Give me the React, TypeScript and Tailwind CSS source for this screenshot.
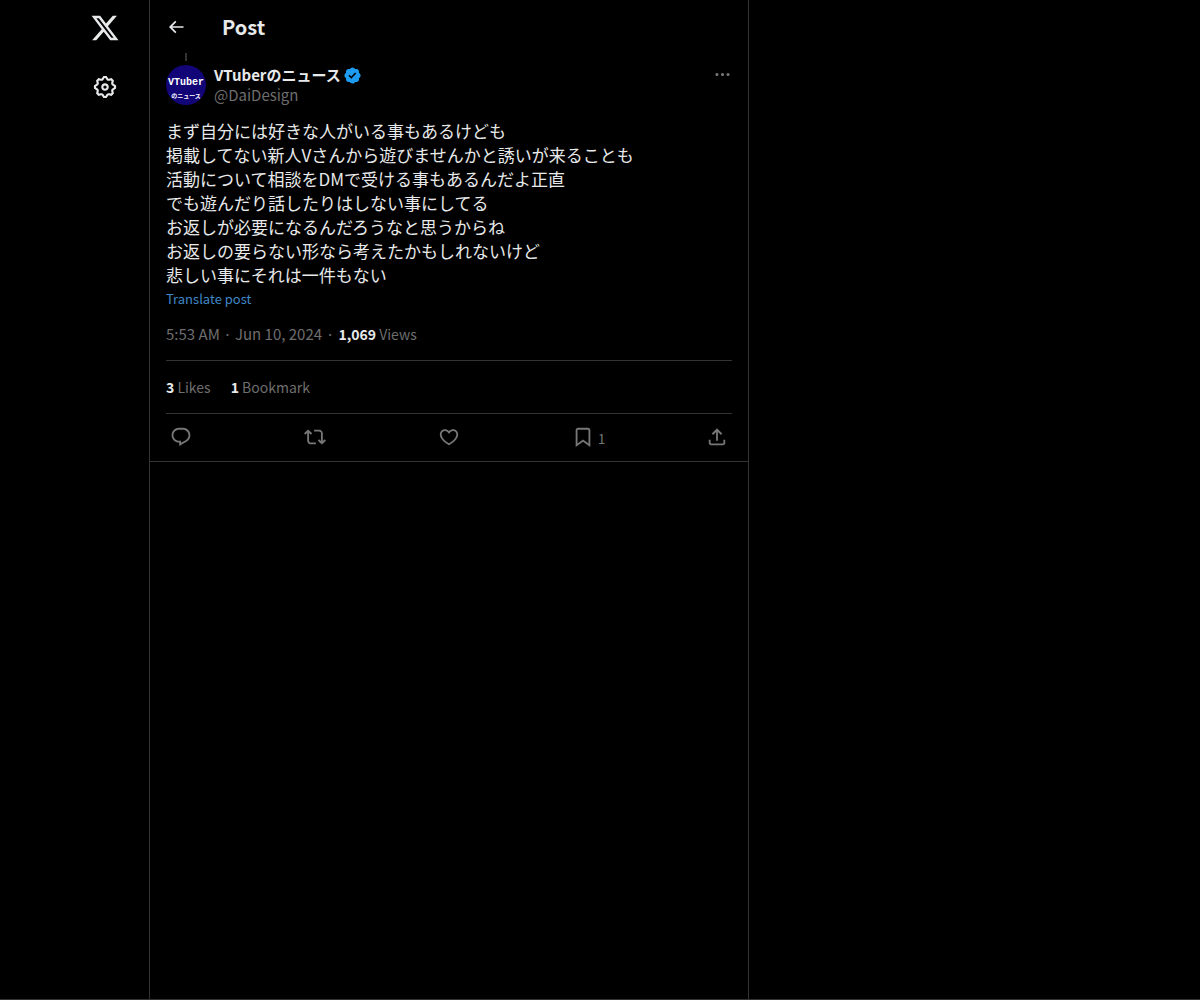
import type { ReactNode } from "react";

const paths = {
    logo: "M18.244 2.25h3.308l-7.227 8.26 8.502 11.24H16.17l-5.214-6.817L4.99 21.75H1.68l7.73-8.835L1.254 2.25H8.08l4.713 6.231zm-1.161 17.52h1.833L7.084 4.126H5.117z",
    settings: "M10.54 1.75h2.92l1.57 2.36c.11.17.32.25.53.21l2.53-.59 2.17 2.17-.58 2.54c-.05.2.04.41.21.53l2.36 1.57v2.92l-2.36 1.57c-.17.12-.26.33-.21.53l.58 2.54-2.17 2.17-2.53-.59c-.21-.04-.42.04-.53.21l-1.57 2.36h-2.92l-1.58-2.36c-.11-.17-.32-.25-.52-.21l-2.54.59-2.17-2.17.58-2.54c.05-.2-.03-.41-.21-.53l-2.35-1.57v-2.92L4.1 8.97c.18-.12.26-.33.21-.53L3.73 5.9 5.9 3.73l2.54.59c.2.04.41-.04.52-.21l1.58-2.36zm1.07 2l-.98 1.47C10.05 6.08 9 6.5 7.99 6.27l-1.46-.34-.6.6.33 1.46c.24 1.01-.18 2.07-1.05 2.64l-1.46.98v.78l1.46.98c.87.57 1.29 1.63 1.05 2.64l-.33 1.46.6.6 1.46-.34c1.01-.23 2.06.19 2.64 1.05l.98 1.47h.78l.97-1.47c.58-.86 1.63-1.28 2.65-1.05l1.45.34.61-.6-.34-1.46c-.23-1.01.18-2.07 1.05-2.64l1.47-.98v-.78l-1.47-.98c-.87-.57-1.28-1.63-1.05-2.64l.34-1.46-.61-.6-1.45.34c-1.02.23-2.07-.19-2.65-1.05l-.97-1.47h-.78zM12 10.5c-.83 0-1.5.67-1.5 1.5s.67 1.5 1.5 1.5c.82 0 1.5-.67 1.5-1.5s-.68-1.5-1.5-1.5zM8.5 12c0-1.93 1.56-3.5 3.5-3.5 1.93 0 3.5 1.57 3.5 3.5s-1.57 3.5-3.5 3.5c-1.94 0-3.5-1.57-3.5-3.5z",
    back: "M7.414 13l5.043 5.04-1.414 1.42L3.586 12l7.457-7.46 1.414 1.42L7.414 11H21v2H7.414z",
    more: "M3 12c0-1.1.9-2 2-2s2 .9 2 2-.9 2-2 2-2-.9-2-2zm9 2c1.1 0 2-.9 2-2s-.9-2-2-2-2 .9-2 2 .9 2 2 2zm7 0c1.1 0 2-.9 2-2s-.9-2-2-2-2 .9-2 2 .9 2 2 2z",
    reply: "M1.751 10c0-4.42 3.584-8 8.005-8h4.366c4.49 0 8.129 3.64 8.129 8.13 0 2.96-1.607 5.68-4.196 7.11l-8.054 4.46v-3.69h-.067c-4.49.1-8.183-3.51-8.183-8.01zm8.005-6c-3.317 0-6.005 2.69-6.005 6 0 3.37 2.77 6.08 6.138 6.01l.351-.01h1.761v2.3l5.087-2.81c1.951-1.08 3.163-3.13 3.163-5.36 0-3.39-2.744-6.13-6.129-6.13H9.756z",
    repost: "M4.5 3.88l4.432 4.14-1.364 1.46L5.5 7.55V16c0 1.1.896 2 2 2H13v2H7.5c-2.209 0-4-1.79-4-4V7.55L1.432 9.48.068 8.02 4.5 3.88zM16.5 6H11V4h5.5c2.209 0 4 1.79 4 4v8.45l2.068-1.93 1.364 1.46-4.432 4.14-4.432-4.14 1.364-1.46 2.068 1.93V8c0-1.1-.896-2-2-2z",
    like: "M16.697 5.5c-1.222-.06-2.679.51-3.89 2.16l-.805 1.09-.806-1.09C9.984 6.01 8.526 5.44 7.304 5.5c-1.243.07-2.349.78-2.91 1.91-.552 1.12-.633 2.78.479 4.82 1.074 1.97 3.257 4.27 7.129 6.61 3.87-2.34 6.052-4.64 7.126-6.61 1.111-2.04 1.03-3.7.477-4.82-.561-1.13-1.666-1.84-2.908-1.91zm4.187 7.69c-1.351 2.48-4.001 5.12-8.379 7.67l-.503.3-.504-.3c-4.379-2.55-7.029-5.19-8.382-7.67-1.36-2.5-1.41-4.86-.514-6.67.887-1.79 2.647-2.91 4.601-3.01 1.651-.09 3.368.56 4.798 2.01 1.429-1.45 3.146-2.1 4.796-2.01 1.954.1 3.714 1.22 4.601 3.01.896 1.81.846 4.17-.514 6.67z",
    bookmark: "M4 4.5C4 3.12 5.119 2 6.5 2h11C18.881 2 20 3.12 20 4.5v18.44l-8-5.71-8 5.71V4.5zM6.5 4c-.276 0-.5.22-.5.5v14.56l6-4.29 6 4.29V4.5c0-.28-.224-.5-.5-.5h-11z",
    share: "M12 2.59l5.7 5.7-1.41 1.42L13 6.41V16h-2V6.41l-3.3 3.3-1.41-1.42L12 2.59zM21 15l-.02 3.51c0 1.38-1.12 2.49-2.5 2.49H5.5C4.11 21 3 19.88 3 18.5V15h2v3.5c0 .28.22.5.5.5h12.98c.28 0 .5-.22.5-.5L19 15h2z",
    verified: "M20.396 11c-.018-.646-.215-1.275-.57-1.816-.354-.54-.852-.972-1.438-1.246.223-.607.27-1.264.14-1.897-.131-.634-.437-1.218-.882-1.687-.47-.445-1.053-.75-1.687-.882-.633-.13-1.29-.083-1.897.14-.273-.587-.704-1.086-1.245-1.44S11.647 1.62 11 1.604c-.646.017-1.273.213-1.813.568s-.969.854-1.24 1.44c-.608-.223-1.267-.272-1.902-.14-.635.13-1.22.436-1.69.882-.445.47-.749 1.055-.878 1.688-.13.633-.08 1.29.144 1.896-.587.274-1.087.705-1.443 1.245-.356.54-.555 1.17-.574 1.817.02.647.218 1.276.574 1.817.356.54.856.972 1.443 1.245-.224.606-.274 1.263-.144 1.896.13.634.433 1.218.877 1.688.47.443 1.054.747 1.687.878.633.132 1.29.084 1.897-.136.274.586.705 1.084 1.246 1.439.54.354 1.17.551 1.816.569.647-.016 1.276-.213 1.817-.567s.972-.854 1.245-1.44c.604.239 1.266.296 1.903.164.636-.132 1.22-.447 1.68-.907.46-.46.776-1.044.908-1.681s.075-1.299-.165-1.903c.586-.274 1.084-.705 1.439-1.246.354-.54.551-1.17.569-1.816zM9.662 14.85l-3.429-3.428 1.293-1.302 2.072 2.072 4.4-4.794 1.347 1.246z",
};

const lines = [
    "まず自分には好きな人がいる事もあるけども",
    "掲載してない新人Vさんから遊びませんかと誘いが来ることも",
    "活動について相談をDMで受ける事もあるんだよ正直",
    "でも遊んだり話したりはしない事にしてる",
    "お返しが必要になるんだろうなと思うからね",
    "お返しの要らない形なら考えたかもしれないけど",
    "悲しい事にそれは一件もない",
];

function Icon({ name, className, box = 24 }: { name: keyof typeof paths; className: string; box?: number }){
    return(
        <svg viewBox={`0 0 ${box} ${box}`} className={`shrink-0 fill-current ${className}`} aria-hidden="true">
            <path d={paths[name]}/>
        </svg>
    );
}

function Action({ label, icon, children }: { label: string; icon: keyof typeof paths; children?: ReactNode }){
    return(
        <div className="flex-1 last:flex-none">
            <button type="button" aria-label={label} className="flex items-center">
                <Icon name={icon} className="size-[22px]"/>
                {children}
            </button>
        </div>
    );
}

function Avatar(){
    return(
        <a href="#profile" aria-label="VTuberのニュース" className="size-10 shrink-0 rounded-full overflow-hidden bg-[#120578]">
            <svg viewBox="0 0 40 40" className="size-10 fill-white font-bold" textAnchor="middle">
                <text x="20" y="20" fontSize="10" className="font-['Liberation_Mono',monospace]">VTuber</text>
                <text x="20" y="33" fontSize="6">のニュース</text>
            </svg>
        </a>
    );
}

export default function App(){

    return(
        <div className="flex min-h-screen bg-black border-b border-[#333333] text-[#e7e9ea] font-['Noto_Sans_CJK_JP',sans-serif]">
            <header className="w-[149px] shrink-0 flex flex-col items-end pr-[29px] pt-[13px]">
                <a href="#home" aria-label="X">
                    <Icon name="logo" className="size-[30px]"/>
                </a>
                <a href="#settings" aria-label="Settings" className="mt-[31px] mr-[2px]">
                    <Icon name="settings" className="size-[26px]"/>
                </a>
            </header>
            <main className="w-full max-w-[600px] border-x border-[#333333]">
                <div className="flex items-center h-[53px] px-4">
                    <button type="button" aria-label="Back" className="w-14">
                        <Icon name="back" className="size-5"/>
                    </button>
                    <h1 className="text-xl leading-6 font-bold">Post</h1>
                </div>
                <article className="px-4 border-b border-[#333333]">
                    <div className="w-10 flex justify-center pb-1">
                        <div className="w-0.5 h-2 bg-[#333333]"/>
                    </div>
                    <div className="flex items-start gap-2">
                        <Avatar/>
                        <div className="grow text-[15px] leading-5">
                            <div className="flex items-center gap-0.5">
                                <a href="#profile" className="font-bold">VTuberのニュース</a>
                                <Icon name="verified" box={22} className="size-[19px] text-[#1d9bf0]"/>
                            </div>
                            <a href="#profile" className="block text-[#6e6e6e]">@DaiDesign</a>
                        </div>
                        <button type="button" aria-label="More" className="text-[#777777]">
                            <Icon name="more" className="size-[19px]"/>
                        </button>
                    </div>
                    <div className="pt-3.5 text-[17px] leading-6">
                        {lines.map((line) => (
                            <p key={line}>{line}</p>
                        ))}
                    </div>
                    <button type="button" className="block text-[13px] leading-6 text-[#3f87c6]">Translate post</button>
                    <div className="flex items-center gap-1 pt-[13px] pb-4 text-[15px] leading-5 text-[#6e6e6e] border-b border-[#333333]">
                        <a href="#time">5:53 AM · Jun 10, 2024</a>
                        <span>·</span>
                        <span className="text-sm leading-5"><b className="text-[#e7e9ea]">1,069</b> Views</span>
                    </div>
                    <div className="flex gap-5 py-4 text-sm leading-5 text-[#6e6e6e] border-b border-[#333333]">
                        <a href="#likes"><b className="text-[#e7e9ea]">3</b> Likes</a>
                        <span><b className="text-[#e7e9ea]">1</b> Bookmark</span>
                    </div>
                    <div className="flex items-center h-[47px] px-1 pb-0.5 text-[#777777]">
                        <Action label="Reply" icon="reply"/>
                        <Action label="Repost" icon="repost"/>
                        <Action label="Like" icon="like"/>
                        <Action label="Bookmark" icon="bookmark">
                            <span className="pl-1 pt-1 text-[13px] leading-4">1</span>
                        </Action>
                        <Action label="Share" icon="share"/>
                    </div>
                </article>
            </main>
        </div>
    );
}
